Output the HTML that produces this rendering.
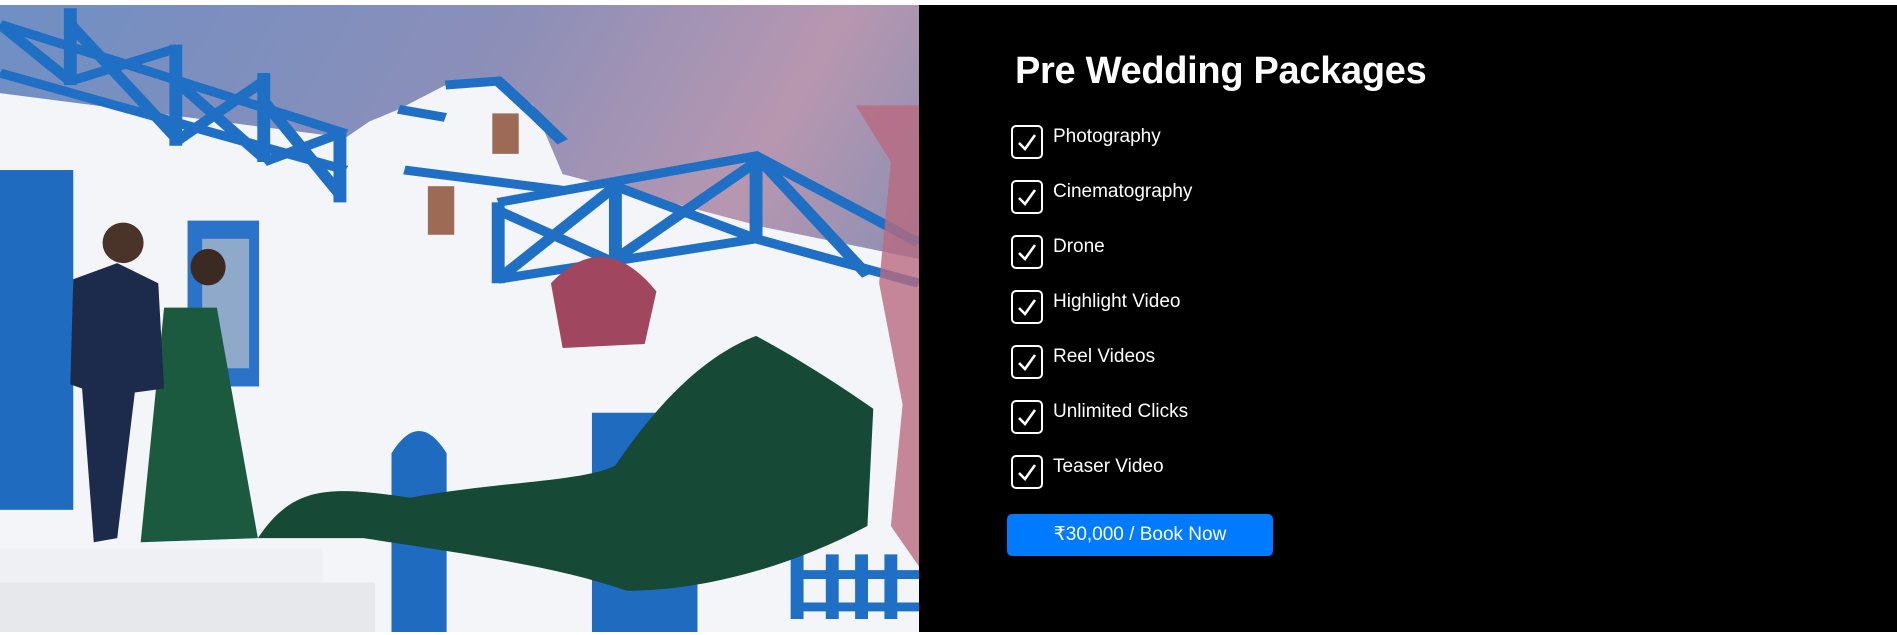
<!DOCTYPE html>
<html><head><meta charset="utf-8"><style>
html,body{margin:0;padding:0;background:#fff;width:1897px;height:635px;overflow:hidden;font-family:"Segoe UI","Liberation Sans",sans-serif;}
#img{position:absolute;left:0;top:5px;width:919px;height:627px;}
#panel{position:absolute;left:919px;top:5px;width:978px;height:627px;background:#000;color:#fff;}
h1{position:absolute;left:96px;top:45px;margin:0;font-size:38px;font-weight:bold;white-space:nowrap;letter-spacing:-0.3px;}
.it{position:absolute;left:92px;height:34px;}
.cb{position:absolute;left:0;top:0;width:28px;height:30px;border:2.5px solid #fff;border-radius:5px;}
.cb svg{position:absolute;left:3px;top:4px;}
.t{position:absolute;left:42px;top:1px;font-size:19px;white-space:nowrap;}
.btn{position:absolute;left:88px;top:509px;width:266px;height:42px;background:#007bff;border-radius:5px;font-size:19px;text-align:center;line-height:42px;}
</style></head><body>
<svg id="img" viewBox="0 12 1568 1550" preserveAspectRatio="none">
<defs><linearGradient id="sky" x1="0" y1="0" x2="1" y2="0.4"><stop offset="0" stop-color="#6f8fc4"/><stop offset="0.5" stop-color="#8c8fb8"/><stop offset="0.8" stop-color="#b797b0"/><stop offset="1" stop-color="#8d8fb2"/></linearGradient></defs>
<rect x="0" y="0" width="1568" height="1568" fill="url(#sky)"/>
<polygon fill="#f4f5f8" points="0,230 590,340 630,300 680,270 760,210 850,195 910,260 960,430 1300,560 1568,640 1568,1568 0,1568"/>
<g stroke="#1f6fc4" stroke-width="22" fill="none">
<path d="M0,60 L590,330 M0,180 L590,420 M120,20 L120,210 M300,110 L300,360 M450,180 L450,400 M580,320 L580,500 M0,60 L120,200 M120,60 L300,340 M300,120 L120,200 M300,200 L450,390 M450,200 L300,350 M450,250 L580,480 M580,330 L450,400"/>
<path d="M850,500 L1290,385 L1568,600 M850,690 L1290,590 L1568,700 M850,500 L850,700 M1050,450 L1050,650 M1290,385 L1290,590 M850,520 L1050,650 M1050,460 L850,690 M1050,460 L1290,590 M1290,400 L1050,640 M1300,400 L1480,680"/>
<path d="M680,270 L760,290 M760,210 L850,200 L910,280 L960,350 M690,420 L960,470"/>
<path d="M1360,1370 L1360,1530 M1420,1370 L1420,1530 M1470,1370 L1470,1530 M1520,1370 L1520,1530 M1360,1420 L1568,1420 M1360,1500 L1568,1500"/>
</g>
<rect x="0" y="420" width="125" height="840" fill="#1e6bc0"/>
<rect x="320" y="545" width="122" height="410" fill="#2a73c8"/>
<rect x="345" y="590" width="80" height="320" fill="#8ea9c9"/>
<path d="M668,1568 L668,1120 Q715,1010 762,1120 L762,1568 Z" fill="#1e6bc0"/>
<rect x="1010" y="1020" width="180" height="548" fill="#1e6bc0"/>
<rect x="730" y="460" width="45" height="120" fill="#9c6a55"/>
<rect x="840" y="280" width="45" height="100" fill="#9c6a55"/>
<rect x="0" y="1355" width="550" height="213" fill="#eef0f3"/>
<rect x="0" y="1440" width="640" height="128" fill="#e6e8ec"/>
<path d="M940,700 Q1030,560 1120,720 L1100,850 L960,860 Z" fill="#a0475f"/>
<path d="M1460,260 L1520,400 L1500,700 L1540,1000 L1520,1300 L1568,1400 L1568,260 Z" fill="#b86a80" opacity="0.8"/>
<path d="M440,1330 C500,1200 560,1200 700,1230 C850,1190 1000,1190 1050,1150 C1120,1000 1200,880 1290,830 C1380,900 1460,980 1490,1010 L1480,1300 C1350,1400 1200,1460 1070,1460 C950,1400 800,1370 620,1330 Z" fill="#174a36"/>
<path d="M280,760 L370,760 L440,1330 L240,1340 Z" fill="#1c5a40"/>
<path d="M125,690 L200,650 L270,700 L280,960 L230,970 L200,1330 L160,1340 L140,960 L120,950 Z" fill="#1c2a4c"/>
<ellipse cx="210" cy="600" rx="35" ry="50" fill="#4a3328"/>
<ellipse cx="355" cy="660" rx="30" ry="45" fill="#3a2a22"/>
</svg>
<div id="panel">
<h1>Pre Wedding Packages</h1>
<div class="it" style="top:120px"><div class="cb"><svg width="22" height="22" viewBox="0 0 22 22"><path d="M3,12 L9,18 L19,4" stroke="#fff" stroke-width="2.6" fill="none"/></svg></div><div class="t">Photography</div></div>
<div class="it" style="top:175px"><div class="cb"><svg width="22" height="22" viewBox="0 0 22 22"><path d="M3,12 L9,18 L19,4" stroke="#fff" stroke-width="2.6" fill="none"/></svg></div><div class="t">Cinematography</div></div>
<div class="it" style="top:230px"><div class="cb"><svg width="22" height="22" viewBox="0 0 22 22"><path d="M3,12 L9,18 L19,4" stroke="#fff" stroke-width="2.6" fill="none"/></svg></div><div class="t">Drone</div></div>
<div class="it" style="top:285px"><div class="cb"><svg width="22" height="22" viewBox="0 0 22 22"><path d="M3,12 L9,18 L19,4" stroke="#fff" stroke-width="2.6" fill="none"/></svg></div><div class="t">Highlight Video</div></div>
<div class="it" style="top:340px"><div class="cb"><svg width="22" height="22" viewBox="0 0 22 22"><path d="M3,12 L9,18 L19,4" stroke="#fff" stroke-width="2.6" fill="none"/></svg></div><div class="t">Reel Videos</div></div>
<div class="it" style="top:395px"><div class="cb"><svg width="22" height="22" viewBox="0 0 22 22"><path d="M3,12 L9,18 L19,4" stroke="#fff" stroke-width="2.6" fill="none"/></svg></div><div class="t">Unlimited Clicks</div></div>
<div class="it" style="top:450px"><div class="cb"><svg width="22" height="22" viewBox="0 0 22 22"><path d="M3,12 L9,18 L19,4" stroke="#fff" stroke-width="2.6" fill="none"/></svg></div><div class="t">Teaser Video</div></div>
<div class="btn">₹30,000 / Book Now</div>
</div>
</body></html>
